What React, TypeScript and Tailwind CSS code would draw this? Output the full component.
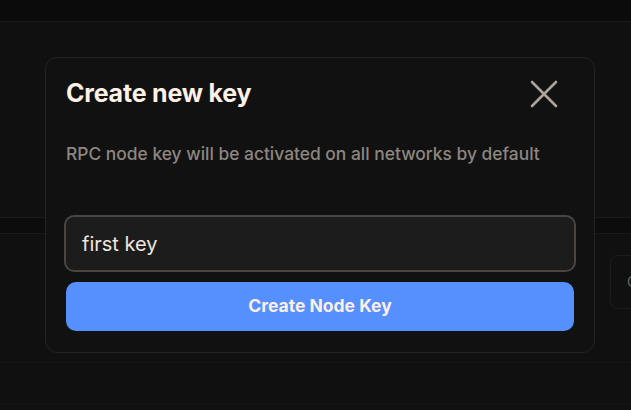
// Modal "Create new key" sobre o painel escuro
export default function App() {
  return (
    <div className="relative w-[631px] h-[410px] overflow-hidden bg-[#101010] font-['Inter',sans-serif]">
      {/* Fundo da página */}
      <div className="h-[22px] bg-[#0b0b0b] border-b border-[#1c1c1c]" />
      <div className="h-[195px]" />
      <div className="h-[17px] bg-[#0c0c0c] border-y border-[#1a1a1a]" />
      <div className="flex justify-end h-[128px] pt-[21px]">
        <div className="w-[40px] h-[54px] -mr-[19px] rounded-lg border border-[#1c1c1c] flex items-center pl-[16px] text-[#6b6560] text-sm">
          C
        </div>
      </div>
      <div className="h-[41px] border-t border-[#151515]" />
      <div className="border-t border-[#151515]" />

      {/* Modal */}
      <div className="absolute left-[45px] top-[57px] w-[550px] h-[296px] rounded-xl border border-[#242424] bg-[#111111] px-5 pt-[18px]">
        <div className="flex items-center justify-between h-[36px]">
          <h2 className="text-[25px] font-bold text-[#fdf0e4] tracking-[-0.2px]">Create new key</h2>
          <button className="mr-[16px] text-[#aca39b]">
            {/* ícone fechar */}
            <svg width="28" height="28" viewBox="0 0 28 28" fill="none" stroke="currentColor" strokeWidth="2.6" strokeLinecap="round">
              <path d="M2 2L26 26M26 2L2 26" />
            </svg>
          </button>
        </div>
        <p className="mt-[30px] text-[17.4px] font-medium leading-6 text-[#8d8680]">
          RPC node key will be activated on all networks by default
        </p>
        <div className="mt-[49px] -mx-0.5 h-[57px] rounded-[10px] border-2 border-[#4a4540] bg-[#1c1c1c] flex items-center px-4">
          <span className="text-[20px] text-[#efe6dd]">first key</span>
        </div>
        <button className="mt-[10px] w-full h-[49px] rounded-[10px] bg-[#5690ff] text-[17.5px] font-bold text-[#fbeee4]">
          Create Node Key
        </button>
      </div>
    </div>
  );
}
